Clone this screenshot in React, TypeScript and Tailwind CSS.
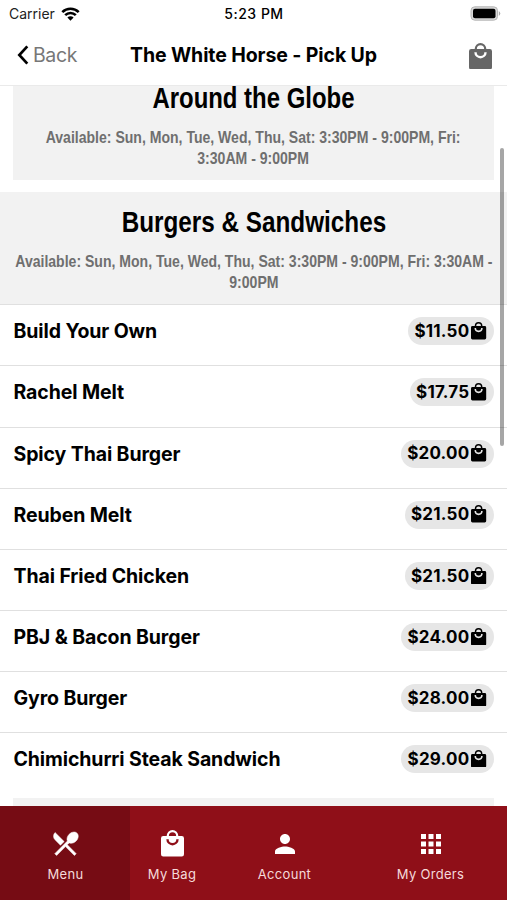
import type { ReactNode } from "react";
import { MdApps, MdPerson } from "react-icons/md";

const items = [
  { name: "Build Your Own", price: "$11.50" },
  { name: "Rachel Melt", price: "$17.75" },
  { name: "Spicy Thai Burger", price: "$20.00" },
  { name: "Reuben Melt", price: "$21.50" },
  { name: "Thai Fried Chicken", price: "$21.50" },
  { name: "PBJ & Bacon Burger", price: "$24.00" },
  { name: "Gyro Burger", price: "$28.00" },
  { name: "Chimichurri Steak Sandwich", price: "$29.00" },
];

function Bag({ className }: { className: string }) {
  return (
    <svg className={className} viewBox="0 0 23 26.5" fill="currentColor">
      <path
        fillRule="evenodd"
        d="M2.2 6h18.6a2.2 2.2 0 0 1 2.2 2.2v16.1a2.2 2.2 0 0 1-2.2 2.2H2.2A2.2 2.2 0 0 1 0 24.3V8.2A2.2 2.2 0 0 1 2.2 6ZM5.3 9.2a6.2 6.2 0 0 0 12.4 0h-2.4a3.8 3.8 0 0 1-7.6 0Z"
      />
      <path d="M6.8 7V5.8a4.7 4.7 0 0 1 9.4 0V7" fill="none" stroke="currentColor" strokeWidth="2.2" />
    </svg>
  );
}

function Utensils() {
  return (
    <svg width="31" height="31" viewBox="0 0 24 24" fill="currentColor" stroke="currentColor" strokeWidth="0.4">
      <path d="M8.1 13.34l2.83-2.83L3.91 3.5a4.008 4.008 0 0 0 0 5.66l4.19 4.18zm6.78-1.81c1.53.71 3.68.21 5.27-1.38 1.91-1.91 2.28-4.65.81-6.12-1.46-1.46-4.2-1.1-6.12.81-1.59 1.59-2.09 3.74-1.38 5.27L3.7 19.87l1.41 1.41L12 14.41l6.88 6.88 1.41-1.41L13.41 13l1.47-1.47z" />
    </svg>
  );
}

function StatusBar() {
  return (
    <div className="grid h-[27px] grid-cols-3 items-center pl-[9px] pr-[6px] text-[14px]">
      <div className="flex items-center gap-[6px] text-[#222]">
        <span>Carrier</span>
        <svg width="19" height="14" viewBox="0 0 19 14" fill="none" stroke="#000" strokeWidth="2.6">
          <path d="M1.3 5.1a11.8 11.8 0 0 1 16.4 0" />
          <path d="M4.2 8.2a7.5 7.5 0 0 1 10.6 0" />
          <path d="M6.4 10.5a4.4 4.4 0 0 1 6.2 0L9.5 13.7Z" fill="#000" stroke="none" />
        </svg>
      </div>
      <span className="whitespace-nowrap pr-[2px] text-center font-medium tracking-[0.5px]">5:23 PM</span>
      <svg className="justify-self-end" width="31" height="15" viewBox="0 0 31 15">
        <rect x="1" y="0.8" width="26.5" height="13.4" rx="3.8" fill="#d8d8d8" stroke="#b5b5b5" />
        <rect x="3" y="2.8" width="22.5" height="9.4" rx="2" />
        <path d="M28.8 5v5q3-2.5 0-5" fill="#aaa" />
      </svg>
    </div>
  );
}

function Header() {
  return (
    <div className="grid h-[58.5px] shrink-0 grid-cols-[120px_1fr_120px] items-center border-b border-[#eaeaea]">
      <div className="flex items-center gap-[4px] pb-[1px] pl-[17px] text-[19.5px] text-[#777]">
        <svg width="12" height="20" viewBox="0 0 12 20" fill="none" stroke="#000" strokeWidth="2.7">
          <path d="m10.3 1.3-8 8.7 8 8.7" />
        </svg>
        <span className="tracking-[-0.4px]">Back</span>
      </div>
      <h1 className="whitespace-nowrap text-center text-[19.5px] font-bold tracking-[-0.1px]">The White Horse - Pick Up</h1>
      <Bag className="mr-[15.5px] h-[26.5px] w-[23px] justify-self-end text-[#666]" />
    </div>
  );
}

function Section({ title, lines, className, titleScale }: { title: string; lines: string[]; className: string; titleScale: string }) {
  return (
    <section className={`flex shrink-0 flex-col items-center bg-[#f2f2f2] font-['Liberation_Sans',sans-serif] font-bold ${className}`}>
      <h2 className={`whitespace-nowrap text-[29px] leading-[34px] ${titleScale}`}>{title}</h2>
      <div className="mt-[13px] scale-x-[0.826] whitespace-nowrap text-center text-[17px] leading-[20.5px] text-[#6f6f6f]">
        {lines.map((line) => (
          <p key={line}>{line}</p>
        ))}
      </div>
    </section>
  );
}

function Tab({ label, icon, className }: { label: string; icon: ReactNode; className: string }) {
  return (
    <div className={`flex flex-col items-center pt-[23px] ${className}`}>
      <div className="flex h-[30px] items-center justify-center">{icon}</div>
      <span className="mt-[6px] text-[13px] leading-[18px] tracking-[0.3px] text-[#f5dada]">{label}</span>
    </div>
  );
}

export default function App() {
  return (
    <div className="relative flex h-[900px] w-[507px] flex-col overflow-hidden bg-white font-[Inter,sans-serif] text-black">
      <StatusBar />
      <Header />
      <main className="flex h-[720px] shrink-0 flex-col overflow-hidden">
        <Section
          title="Around the Globe"
          titleScale="scale-x-[0.825]"
          className="mx-[13px] -mt-[4.5px] h-[98.5px]"
          lines={["Available: Sun, Mon, Tue, Wed, Thu, Sat: 3:30PM - 9:00PM, Fri:", "3:30AM - 9:00PM"]}
        />
        <Section
          title="Burgers & Sandwiches"
          titleScale="scale-x-[0.837]"
          className="mt-[12.5px] h-[112.4px] pt-[13px]"
          lines={["Available: Sun, Mon, Tue, Wed, Thu, Sat: 3:30PM - 9:00PM, Fri: 3:30AM -", "9:00PM"]}
        />
        {items.map((item) => (
          <div key={item.name} className="flex h-[61.1px] shrink-0 items-start justify-between border-t border-[#e0e0e0] px-[13px] pt-[12px]">
            <span className="pl-[0.5px] text-[19.5px] font-bold leading-[28px] tracking-[-0.1px]">{item.name}</span>
            <span className="flex h-[28px] items-center rounded-full bg-[#e6e6e6] pl-[6.5px] pr-[7.5px] text-[17px] font-bold tracking-[0.2px]">
              <span className="pt-[1px]">{item.price}</span>
              <Bag className="mb-[1px] ml-[2px] h-[17.5px] w-[15.2px]" />
            </span>
          </div>
        ))}
        <div className="mx-[13px] mt-[5px] h-[10px] shrink-0 bg-[#f2f2f2]" />
      </main>
      <nav className="flex h-[94.5px] shrink-0 bg-[#8f0f18] text-white">
        <Tab label="Menu" className="w-[130px] bg-[#760c14] pl-[1px]" icon={<Utensils />} />
        <Tab label="My Bag" className="w-[84px]" icon={<Bag className="h-[26.5px] w-[23px]" />} />
        <Tab label="Account" className="w-[141px]" icon={<MdPerson size={30} />} />
        <Tab label="My Orders" className="w-[151px]" icon={<MdApps size={30} />} />
      </nav>
      <div className="absolute left-[500px] top-[148px] h-[298px] w-[4px] rounded-full bg-black/35" />
    </div>
  );
}
